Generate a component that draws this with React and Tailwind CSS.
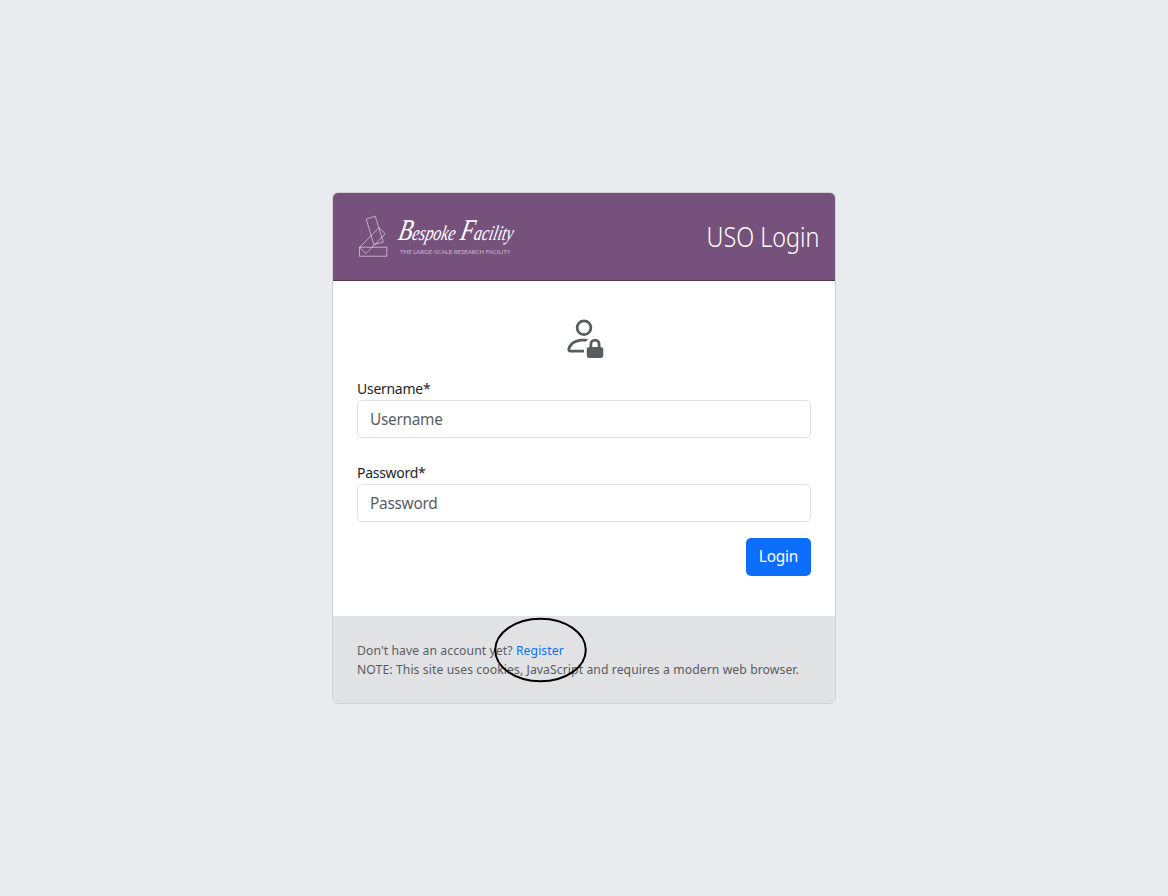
import { BsPersonLock } from "react-icons/bs";

function Logo() {
  return (
    <svg width="164" height="50" viewBox="0 0 164 50" className="block overflow-visible">
      <g fill="none" stroke="#fff" strokeOpacity="0.6" strokeWidth="0.9">
        <rect x="2.4" y="35.2" width="27.4" height="9" />
        <path d="M9.2 7.1 18.2 4.2 26.3 30 16.8 32.5Z" />
        <path d="M22 15.6 28.3 21.8 9 41.6 2.7 35.3Z" />
      </g>
      <g fill="#fff" fontFamily="'Liberation Serif', serif" fontStyle="italic" fontSize="21" transform="translate(5.3 0) skewX(-12)">
        <text x="41" y="28" textLength="57" lengthAdjust="spacingAndGlyphs">
          <tspan fontSize="30">B</tspan>espoke
        </text>
        <text x="103" y="28" textLength="53" lengthAdjust="spacingAndGlyphs">
          <tspan fontSize="30">F</tspan>acility
        </text>
      </g>
      <text x="43" y="42" textLength="110.5" lengthAdjust="spacingAndGlyphs" fill="#fff" fillOpacity="0.6" fontFamily="Lato, sans-serif" fontSize="6.2">
        THE LARGE-SCALE RESEARCH FACILITY
      </text>
    </svg>
  );
}

function Field({ label, type, className }) {
  return (
    <label className={className}>
      <span className="block h-[23px] pt-px text-[14px] leading-[22px] tracking-[-0.28px] text-[#212529]">{label}*</span>
      <input
        type={type}
        placeholder={label}
        className="block h-[38px] w-full rounded-[5px] border border-[#dee2e6] bg-white px-3 text-[15.4px] tracking-[-0.28px] text-[#212529] placeholder:text-[#595c5f]"
      />
    </label>
  );
}

export default function App() {
  return (
    <main className="flex h-[896px] items-center justify-center bg-[#e8ecef] font-['Noto_Sans',sans-serif]">
      <section className="flex h-[512px] w-[504px] flex-col overflow-hidden rounded-[6px] border border-[#cfd2d5] bg-white">
        <header className="flex h-[88px] shrink-0 items-center justify-between border-b border-[#5c315f] bg-[#76517b] pr-4 pl-6">
          <Logo />
          <h1 className="origin-right scale-x-[0.865] pt-0.5 text-[27px] font-light whitespace-nowrap text-white">USO Login</h1>
        </header>
        <form className="flex h-[335px] shrink-0 flex-col px-6 pt-[33px]" onSubmit={(e) => e.preventDefault()}>
          <BsPersonLock className="mx-auto block shrink-0 text-[#595c5f]" size={44} />
          <Field label="Username" type="text" className="mt-[19px] block" />
          <Field label="Password" type="password" className="mt-[23px] block" />
          <button className="mt-4 h-[38px] w-[65px] self-end rounded-[5px] bg-[#0d6efd] pb-px text-[15.4px] tracking-[-0.2px] text-white">Login</button>
        </form>
        <footer className="relative grow bg-[#e1e2e4] px-6 pt-[25px] text-[12.2px] leading-[19px] tracking-[0.085px] whitespace-nowrap text-[#595c5f]">
          <p>Don't have an account yet? <a href="#register" className="text-[#0d6efd]">Register</a></p>
          <p>NOTE: This site uses cookies, JavaScript and requires a modern web browser.</p>
          <svg className="pointer-events-none absolute top-[1px] left-[160px]" width="96" height="66" viewBox="0 0 96 66">
            <ellipse cx="47.5" cy="33" rx="45.3" ry="31.3" fill="none" stroke="#000" strokeWidth="2" />
          </svg>
        </footer>
      </section>
    </main>
  );
}
